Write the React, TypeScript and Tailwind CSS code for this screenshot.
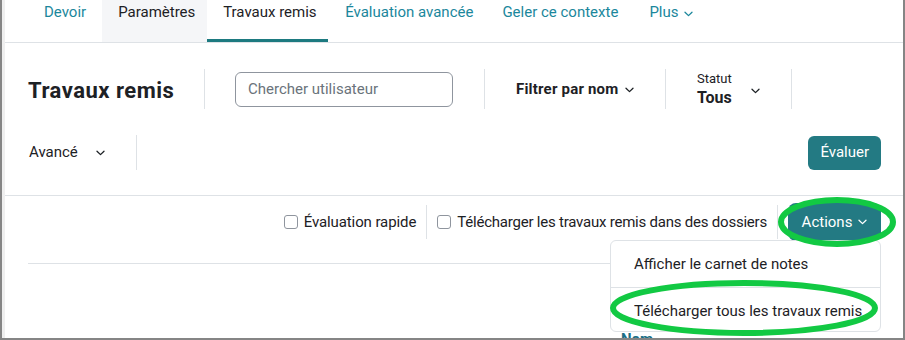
import React from "react";

const Chevron = ({ className = "" }: { className?: string }) => (
  <svg className={className} width="9" height="6" viewBox="0 0 9 6" fill="none">
    <path d="M1 1.2 L4.5 4.6 L8 1.2" stroke="currentColor" strokeWidth="1.3" strokeLinecap="round" strokeLinejoin="round" />
  </svg>
);

const Sep = ({ h = "h-10" }: { h?: string }) => <div className={`w-px ${h} bg-[#dee2e6] shrink-0`} />;

export default function App() {
  const font = { fontFamily: "Roboto, 'Noto Sans', sans-serif" };
  return (
    <div
      className="relative w-[905px] h-[340px] overflow-hidden bg-white border-l-2 border-r-2 border-b-2 border-[#858585] text-[#1d2125] text-[15px] whitespace-nowrap"
      style={font}
    >
      <div className="h-full border-l-[3px] border-[#efefef]">
        {/* Tabs */}
        <div className="flex h-[43px] border-b border-[#dee2e6] pl-[23px]">
          <div className="px-4 pt-[1px] text-[#1b879c]">Devoir</div>
          <div className="px-4 pt-[1px] bg-[#f5f6f8] w-[105px]">Paramètres</div>
          <div className="px-4 pt-[1px] border-b-[3px] border-[#1d7a80] w-[121px]">Travaux remis</div>
          <div className="pl-[17px] pr-4 pt-[1px] text-[#1b879c]">Évaluation avancée</div>
          <div className="pl-[13px] pr-4 pt-[1px] text-[#1b879c]">Geler ce contexte</div>
          <div className="pl-[15px] pr-4 pt-[1px] text-[#1b879c] flex items-start gap-[5px]">
            Plus
            <Chevron className="mt-[10px]" />
          </div>
        </div>

        {/* Heading row */}
        <div className="flex items-center h-10 mt-[26px] pl-[23px]">
          <div className="w-[176px] text-[22px] font-bold leading-none tracking-[0.5px] pt-[3px]">Travaux remis</div>
          <Sep />
          <div className="ml-[30px] w-[218px] h-[35px] rounded-[6px] border border-[#8f959e] flex items-center pl-3 text-[#6a737b]">
            Chercher utilisateur
          </div>
          <div className="w-[31px]" />
          <Sep />
          <div className="ml-[31px] w-[149px] flex items-center gap-[7px] font-bold tracking-[0.2px]">
            Filtrer par nom
            <Chevron className="mt-[1px]" />
          </div>
          <Sep />
          <div className="ml-[31px] w-[94px] flex items-center">
            <div className="flex flex-col">
              <span className="text-[13px] leading-[16px] mt-[2px]">Statut</span>
              <span className="text-[16px] font-bold leading-[22px]">Tous</span>
            </div>
            <Chevron className="ml-[19px] mt-[3px]" />
          </div>
          <Sep />
        </div>

        {/* Row 3 */}
        <div className="flex items-center h-[35px] mt-[26px] pl-[24px] pr-[22px]">
          <div className="flex items-center w-[107px]">
            Avancé
            <Chevron className="ml-[18px] mt-[1px]" />
          </div>
          <Sep h="h-[35px]" />
          <div className="flex-1" />
          <div className="h-[34px] px-[12px] rounded-[6px] bg-[#237a83] text-white flex items-center">Évaluer</div>
        </div>

        {/* Divider */}
        <div className="mt-[25px] border-t border-[#dee2e6]" />

        {/* Row 4 */}
        <div className="flex items-center justify-end h-[38px] mt-[7px] pr-[22px]">
          <div className="flex items-center">
            <div className="w-[14px] h-[14px] rounded-[3px] border border-[#8f959e] mr-[6px]" />
            <span className="tracking-[-0.1px]">Évaluation rapide</span>
          </div>
          <div className="mx-[10px]">
            <Sep h="h-[34px]" />
          </div>
          <div className="flex items-center">
            <div className="w-[14px] h-[14px] rounded-[3px] border border-[#8f959e] mr-[6px]" />
            <span className="tracking-[-0.22px]">Télécharger les travaux remis dans des dossiers</span>
          </div>
          <div className="mx-[10px]">
            <Sep h="h-[34px]" />
          </div>
          <div className="h-[38px] w-[93px] rounded-[8px] bg-[#237a83] text-white flex items-center justify-center gap-[6px]">
            Actions
            <Chevron />
          </div>
        </div>

        {/* content line */}
        <div className="mt-[22px] ml-[23px] mr-[22px] border-t border-[#dee2e6]" />
        <div className="mt-[65px] ml-[616px] text-[#1b6f86] font-bold text-[15px] leading-[20px]">Nom</div>
      </div>

      {/* Dropdown */}
      <div className="absolute left-[608px] top-[240px] w-[271px] h-[92px] bg-white border border-[#dee2e6] rounded-[6px] pt-[7px]">
        <div className="h-8 flex items-center pl-[23px]">Afficher le carnet de notes</div>
        <div className="my-[7px] border-t border-[#dee2e6]" />
        <div className="h-8 flex items-center pl-[23px]">Télécharger tous les travaux remis</div>
      </div>

      {/* Green annotation ellipses */}
      <svg className="absolute left-0 top-0 pointer-events-none" width="905" height="340">
        <ellipse cx="835" cy="222" rx="56" ry="22" fill="none" stroke="#12c943" strokeWidth="6" />
        <ellipse cx="742" cy="308" rx="131" ry="25" fill="none" stroke="#12c943" strokeWidth="6" />
      </svg>
    </div>
  );
}
